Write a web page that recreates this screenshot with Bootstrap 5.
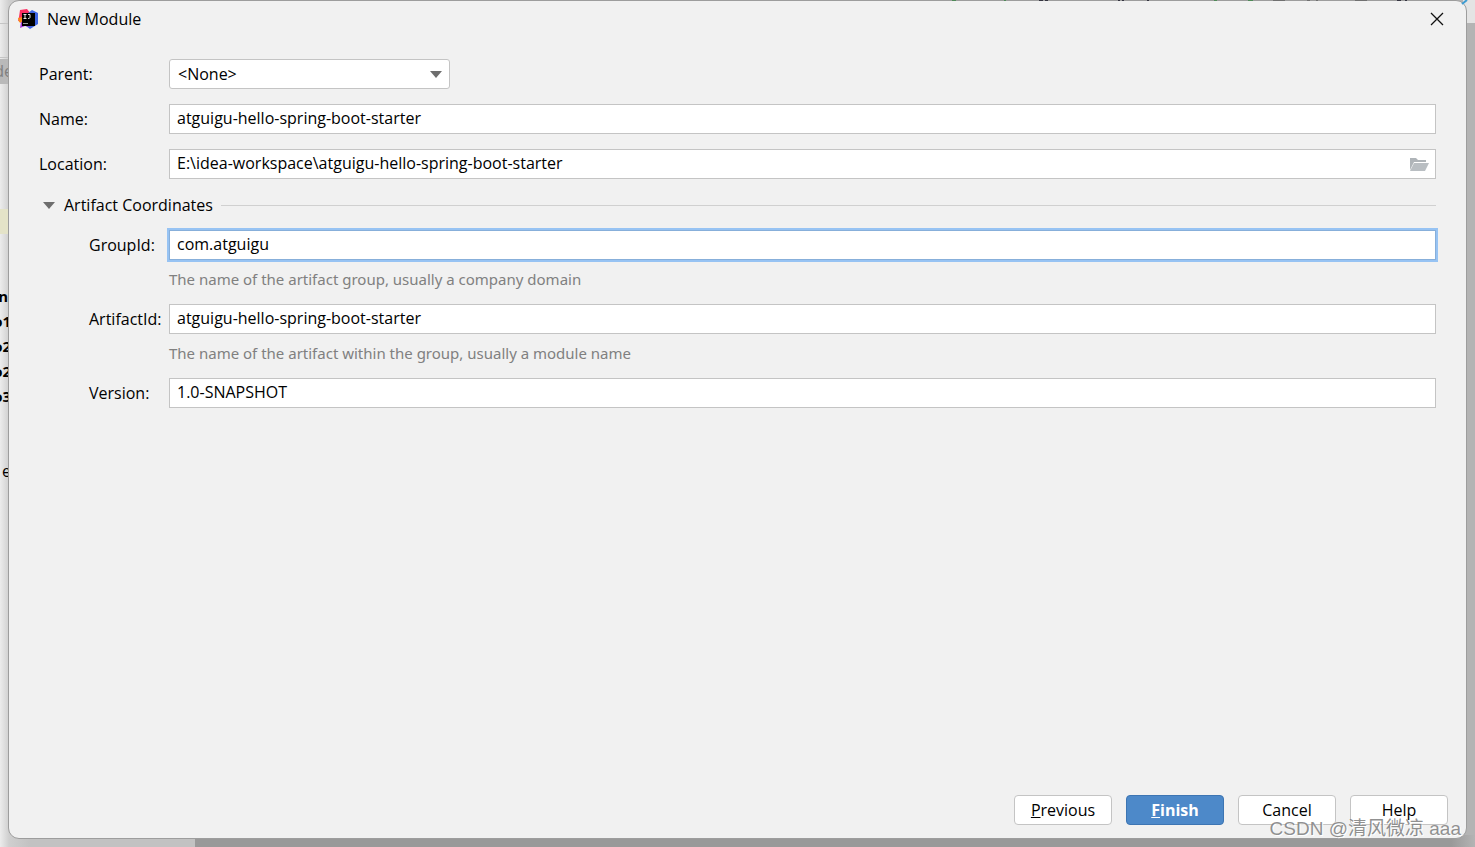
<!DOCTYPE html>
<html lang="en">
<head>
<meta charset="utf-8">
<meta name="viewport" content="width=device-width, initial-scale=1">
<title>New Module</title>
<link href="https://cdn.jsdelivr.net/npm/bootstrap@5.3.0/dist/css/bootstrap.min.css" rel="stylesheet">
<style>
  body { font-family: "Open Sans", "Noto Sans CJK SC", sans-serif; font-size: 16px; line-height: 20px; color: #000; background: #b4b4b4; }
  /* IDE window behind the dialog */
  .ide-left { width: 195px; background: linear-gradient(90deg, #ececec 0, #cfcfcf 9px, #c2c2c2 30px); }
  .ide-right { width: 12px; top: 0; right: 0; height: 23px; background: #e4e4e4; }
  .ide-bottom { left: 195px; right: 0; bottom: 0; height: 12px; background: linear-gradient(90deg, #999 0, #999 calc(100% - 24px), #b4b4b4 100%); }
  .ide-tools { top: 0; right: 0; z-index: 1; }
  .ide-rule { left: 0; width: 9px; height: 1px; background: #c4c4c4; }
  .ide-band { left: 0; width: 9px; height: 25px; }
  .ide-text { left: 0; width: 11px; height: 25px; line-height: 25px; overflow: hidden; white-space: nowrap; direction: rtl; }
  .ide-text.fw-bold { font-size: 15px; }
  .ide-text.narrow-text { width: 8px; }
  .ide-text.wide-text { width: 13px; }
  /* dialog */
  .module-dialog { min-height: calc(100vh - 8px); margin: 0 8px 8px; background: #f1f1f1; border: 1px solid #9d9d9d; border-radius: 11px; }
  .title-bar { height: 36px; padding: 0 22px 0 9px; gap: 9px; }
  .close-btn { line-height: 0; color: #111; }
  .dialog-form { padding: 22px 30px 0; }
  .form-line { display: flex; align-items: center; height: 30px; }
  .form-line + .form-line { margin-top: 15px; }
  .form-line > label { width: 130px; flex: none; }
  .form-line.inner-line > label { width: 80px; }
  .inner-part { padding-left: 50px; }
  .field, .field:focus { height: 30px; padding: 0 7px 2px; border: 1px solid #c4c4c4; border-radius: 0; background: #fff; color: #000; font-size: 16px; line-height: 20px; box-shadow: none; }
  select.field, select.field:focus { padding: 0 8px; border-radius: 3px; background-image: none; }
  .parent-box { width: 281px; }
  .field.active-field, .field.active-field:focus { border-color: #87afda; box-shadow: 0 0 0 2px #97c3f3; }
  .select-arrow { right: 8px; top: 12px; }
  .folder-btn { right: 7px; top: 8px; line-height: 0; }
  .section-line { margin: 16px 0 15px; }
  .section-btn { height: 20px; padding: 0 8px 0 4px; gap: 9px; color: #000; line-height: 20px; }
  .section-rule { height: 1px; background: #d0d0d0; }
  .hint { padding-left: 80px; margin: 9px 0 15px; color: #808080; font-family: "Noto Sans", sans-serif; font-size: 15px; }
  .dialog-btn, .dialog-btn:hover { width: 98px; height: 30px; padding: 0; border: 1px solid #c4c4c4; border-radius: 4px; background: #fff; color: #000; font-size: 16px; line-height: 20px; }
  .dialog-btn.main-btn { background: #4d89c9; border-color: #3d75b3; color: #fff; font-weight: 700; }
  .btn-line { gap: 14px; padding: 0 18px 13px; }
  .watermark { right: 14px; bottom: 6px; font-family: "Liberation Sans", "Noto Sans CJK SC", sans-serif; font-size: 19px; line-height: 24px; color: rgba(125,125,125,.85); text-shadow: 1px 1px 0 #fff; pointer-events: none; }
</style>
</head>
<body class="position-relative min-vh-100 overflow-hidden">
  <div class="ide-left position-absolute top-0 bottom-0 start-0">
    <div class="ide-rule position-absolute" style="top:23px"></div>
    <div class="ide-rule position-absolute" style="top:57px"></div>
    <div class="ide-band position-absolute" style="top:59px;background:#b9b9b9"></div>
    <div class="ide-band position-absolute" style="top:209px;background:#e4e3c8"></div>
    <div class="ide-text wide-text position-absolute" style="top:59px;color:#808080">de</div>
    <div class="ide-text narrow-text position-absolute fw-bold" style="top:284px">n</div>
    <div class="ide-text position-absolute fw-bold" style="top:309px">o1</div>
    <div class="ide-text position-absolute fw-bold" style="top:334px">o2</div>
    <div class="ide-text position-absolute fw-bold" style="top:359px">o2</div>
    <div class="ide-text position-absolute fw-bold" style="top:384px">o3</div>
    <div class="ide-text position-absolute" style="top:459px">e</div>
  </div>
  <div class="ide-right position-absolute"></div>
  <div class="ide-bottom position-absolute"></div>
  <svg class="ide-tools position-absolute pe-none" width="545" height="6" viewBox="0 0 545 6" aria-hidden="true">
    <path d="M22 .5H26M74 .5H76M284 .5H287M318 .5H323" stroke="#4f8a58"/>
    <path d="M109 .5H113M115 .5H118M188 .5H190M192 .5H194M217 .5H219M467 .5H471M475 .5H477" stroke="#353541"/>
    <path d="M343 .5H355M377 .5H380M386 .5H388M425 .5H437" stroke="#707070"/>
    <path d="M532 4 537 0" stroke="#3d9cd2" stroke-width="2"/>
  </svg>

  <main class="module-dialog position-relative d-flex flex-column" role="dialog" aria-labelledby="dlgTitle">
    <header class="title-bar d-flex align-items-center">
      <svg width="20" height="20" viewBox="0 0 20 20" aria-hidden="true">
        <path d="M2 1 9 0 13 5 5 11 0 12 1 8Z" fill="#fb2f63"/>
        <path d="M0 9 4 8 5 15 1 13Z" fill="#fb8b1e"/>
        <path d="M10 4 14 1 20 4 20 15 12 20 8 17Z" fill="#3f66e4"/>
        <path d="M3 13 9 14 12 18 7 17 2 19Z" fill="#a43ad8"/>
        <rect x="4" y="4" width="13" height="13" fill="#000"/>
        <path d="M5.500 5.500H8.500M7 5.500V9M5.500 9.500H8.500M10 5.500H12V8.500Q12 9.500 10 9.500" fill="none" stroke="#e6e6e6"/>
        <path d="M5 14.500H10" stroke="#999"/>
      </svg>
      <span id="dlgTitle" class="me-auto">New Module</span>
      <button type="button" class="close-btn btn p-0 border-0" aria-label="Close">
        <svg width="14" height="14" viewBox="0 0 14 14"><path d="M1 1 13 13M13 1 1 13" stroke="currentColor" stroke-width="1.300"/></svg>
      </button>
    </header>

    <form class="dialog-form">
      <div class="form-line">
        <label for="parent">Parent:</label>
        <div class="parent-box position-relative">
          <select id="parent" class="field form-select"><option>&lt;None&gt;</option></select>
          <svg class="select-arrow position-absolute pe-none" width="12" height="7" viewBox="0 0 12 7"><path d="M0 0H12L6 7Z" fill="#6e6e6e"/></svg>
        </div>
      </div>
      <div class="form-line">
        <label for="name">Name:</label>
        <input id="name" class="field form-control" type="text" value="atguigu-hello-spring-boot-starter">
      </div>
      <div class="form-line">
        <label for="location">Location:</label>
        <div class="position-relative flex-grow-1">
          <input id="location" class="field form-control" type="text" value="E:\idea-workspace\atguigu-hello-spring-boot-starter">
          <button type="button" class="folder-btn position-absolute btn p-0 border-0" aria-label="Browse">
            <svg width="20" height="15" viewBox="0 0 20 15"><path d="M1 13V1H7L9 3H17V5H5Z" fill="#afb4b8"/><path d="M5 6H20L16 14H1Z" fill="#b9bec2"/></svg>
          </button>
        </div>
      </div>
      <div class="section-line d-flex align-items-center">
        <button type="button" class="section-btn btn border-0 d-flex align-items-center" aria-expanded="true">
          <svg width="12" height="7" viewBox="0 0 12 7"><path d="M0 0H12L6 7Z" fill="#6e6e6e"/></svg>
          Artifact Coordinates
        </button>
        <div class="section-rule flex-grow-1"></div>
      </div>
      <div class="inner-part">
        <div class="form-line inner-line">
          <label for="groupId">GroupId:</label>
          <input id="groupId" class="field active-field form-control" type="text" value="com.atguigu">
        </div>
        <p class="hint">The name of the artifact group, usually a company domain</p>
        <div class="form-line inner-line">
          <label for="artifactId">ArtifactId:</label>
          <input id="artifactId" class="field form-control" type="text" value="atguigu-hello-spring-boot-starter">
        </div>
        <p class="hint">The name of the artifact within the group, usually a module name</p>
        <div class="form-line inner-line">
          <label for="version">Version:</label>
          <input id="version" class="field form-control" type="text" value="1.0-SNAPSHOT">
        </div>
      </div>
    </form>

    <footer class="btn-line d-flex justify-content-end mt-auto">
      <button type="button" class="dialog-btn btn"><u>P</u>revious</button>
      <button type="button" class="dialog-btn main-btn btn"><u>F</u>inish</button>
      <button type="button" class="dialog-btn btn">Cancel</button>
      <button type="button" class="dialog-btn btn">Help</button>
    </footer>
  </main>
  <div class="watermark position-absolute">CSDN @清风微凉 aaa</div>
<script src="https://cdn.jsdelivr.net/npm/bootstrap@5.3.0/dist/js/bootstrap.bundle.min.js"></script>
</body>
</html>
